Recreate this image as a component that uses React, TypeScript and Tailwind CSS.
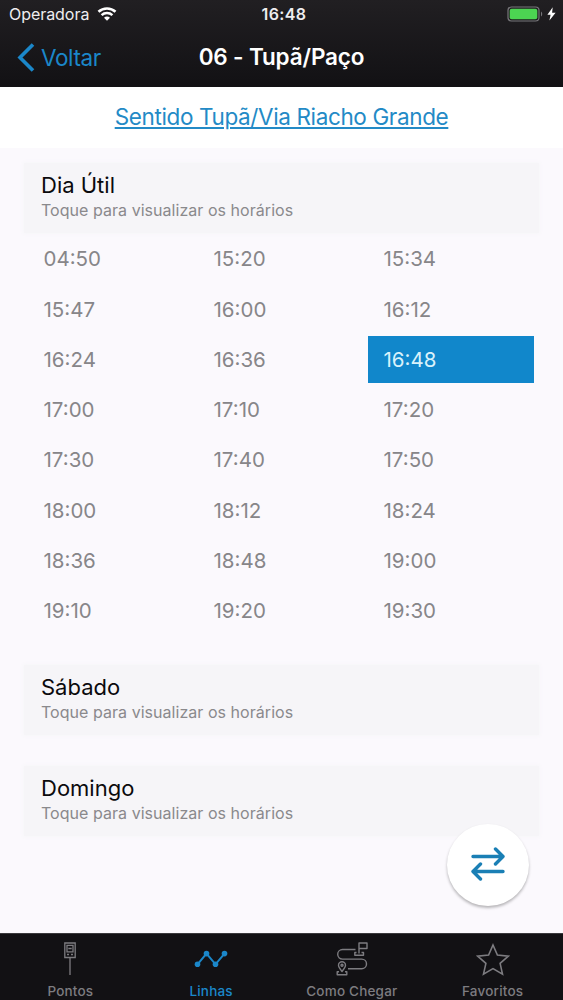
import React from "react";

const times = [
  "04:50", "15:20", "15:34",
  "15:47", "16:00", "16:12",
  "16:24", "16:36", "16:48",
  "17:00", "17:10", "17:20",
  "17:30", "17:40", "17:50",
  "18:00", "18:12", "18:24",
  "18:36", "18:48", "19:00",
  "19:10", "19:20", "19:30",
];

function StatusBar() {
  return (
    <div className="grid h-7 grid-cols-3 items-center pl-[9px] pr-[7px] text-[16px] leading-7 text-[#eeedef]">
      <div className="flex items-center gap-[8px]">
        <span className="tracking-[-0.050px]">Operadora</span>
        <svg width="20" height="14" viewBox="0 0 19 14" fill="none" stroke="#fff">
          <path d="M1 4.8C5.8.3 13.2.3 18 4.8" strokeWidth="2.6" />
          <path d="M4.1 8.2c3-2.8 7.8-2.8 10.8 0" strokeWidth="2.5" />
          <path d="M9.5 13.8 6.5 10.7c1.7-1.5 4.3-1.5 6 0Z" fill="#fff" stroke="none" />
        </svg>
      </div>
      <div className="pl-[3px] text-center font-semibold tracking-[0.4px]">16:48</div>
      <div className="flex items-center justify-end gap-[4px]">
        <svg width="36" height="16" viewBox="0 0 36 16" fill="none">
          <rect x="1" y="1" width="31" height="14" rx="3.5" stroke="#77767a" strokeWidth="1.2" />
          <rect x="2.7" y="2.7" width="27.6" height="10.6" rx="2" fill="#4cd452" />
          <path d="M34 5.5c1.6.8 1.6 4.2 0 5Z" fill="#77767a" />
        </svg>
        <svg width="9" height="14" viewBox="0 0 9 14" fill="#fff">
          <path d="M5.7.3.4 7.8h3.2L2.4 13.6 8.6 5.7H5.1Z" />
        </svg>
      </div>
    </div>
  );
}

function NavBar() {
  return (
    <div className="grid h-[59px] grid-cols-[1fr_auto_1fr] items-center pl-[17px] pr-[17px]">
      <div className="flex items-center gap-[6px] text-[#1b87c9]">
        <svg width="18" height="29" viewBox="0 0 18 29" fill="none" stroke="currentColor" strokeWidth="3.6">
          <path d="M16 1.5 3 14.5 16 27.5" />
        </svg>
        <span className="text-[22.5px] leading-7 tracking-[-0.4px]">Voltar</span>
      </div>
      <h1 className="-mt-px text-[22.5px] font-semibold leading-7 tracking-[-0.150px] text-white">06 - Tupã/Paço</h1>
      <div />
    </div>
  );
}

function DayCard({ title }: { title: string }) {
  return (
    <div className="mx-[24px] h-[70px] bg-[#f6f5f8] pl-[17px] pt-[8px] shadow-[0_0_4px_1px_#f7f6f9]">
      <div className="text-[22px] leading-[28px] text-[#0b0a0d]">{title}</div>
      <div className="mt-px text-[16px] leading-[20px] tracking-[0.040px] text-[#8a898c]">
        Toque para visualizar os horários
      </div>
    </div>
  );
}

function Tab({ label, active, children }: { label: string; active?: boolean; children: React.ReactNode }) {
  return (
    <div className={`flex flex-col items-center ${active ? "text-[#1b87c9]" : "text-[#7d7c80]"}`}>
      <div className="mt-[7px] flex h-9 items-center">{children}</div>
      <span className="mt-[5px] whitespace-nowrap text-[13.5px] font-medium leading-[18px] tracking-[0.2px]">{label}</span>
    </div>
  );
}

export default function App() {
  return (
    <div className="relative flex h-[1000px] w-[563px] flex-col overflow-hidden bg-[#fbf9fd] font-['Inter',sans-serif]">
      <header className="h-[87px] shrink-0 bg-linear-to-b from-[#211f22] to-[#121114]">
        <StatusBar />
        <NavBar />
      </header>

      <div className="flex h-[61px] shrink-0 justify-center bg-white pt-[16px]">
        <a className="text-[22.5px] leading-[28px] tracking-[-0.370px] text-[#238ac6] underline decoration-[1.5px] underline-offset-[2px]">
          Sentido Tupã/Via Riacho Grande
        </a>
      </div>

      <main className="flex-1 pt-[15px]">
        <DayCard title="Dia Útil" />
        <div className="ml-[28px] mt-[2px] grid grid-cols-[166px_166px_166px] gap-x-[4px] gap-y-[2.75px]">
          {times.map((t) => (
            <div
              key={t}
              className={`flex h-[47.5px] items-center pl-[15.5px] pt-[2px] text-[20.5px] ${
                t === "16:48" ? "bg-[#1187cb] text-[#d9f2fb]" : "text-[#878689]"
              }`}
            >
              {t}
            </div>
          ))}
        </div>
        <div className="mt-[31px] flex flex-col gap-[30.5px]">
          <DayCard title="Sábado" />
          <DayCard title="Domingo" />
        </div>
      </main>

      <nav className="grid h-[67px] shrink-0 grid-cols-4 border-t border-[#3a393c] bg-[#121114]">
        <Tab label="Pontos">
          <svg width="12" height="34" viewBox="0 0 12 34" fill="none" stroke="currentColor" strokeWidth="1.3">
            <path d="M.8 1h10.4v14.5H.8ZM3 3.3h6v6.5H3ZM4.3 6.5h3.4M3 12.5h2M7 12.5h2M6 15.5V33" />
          </svg>
        </Tab>
        <Tab label="Linhas" active>
          <svg width="34" height="18" viewBox="0 0 34 18" fill="currentColor">
            <path d="M3.5 14.3 12.5 3.6l9 10.7 9-10.7" fill="none" stroke="currentColor" strokeWidth="2" />
            <circle cx="3.5" cy="14.3" r="2.8" />
            <circle cx="12.5" cy="3.6" r="2.8" />
            <circle cx="21.5" cy="14.3" r="2.8" />
            <circle cx="30.5" cy="3.6" r="2.8" />
          </svg>
        </Tab>
        <Tab label="Como Chegar">
          <svg width="32" height="34" viewBox="0 0 32 34" fill="none" stroke="currentColor" strokeWidth="1.4" strokeLinejoin="round">
            <path d="M19.5 7.5H6.5a4.8 4.8 0 0 0 0 9.6h19.2a4.8 4.8 0 0 1 0 9.6H12" />
            <path d="M23 11.5V1h8v5.5h-8M20.5 10.5h-1.7v2.7h8.7v-2.7h-2" />
            <path d="M6 29.5c-2.3-3-3.5-4.8-3.5-6.3a3.5 3.5 0 0 1 7 0c0 1.5-1.2 3.3-3.5 6.3ZM3 29.7H1.2v3h9.6v-3H9" />
            <circle cx="6" cy="23.3" r="1" />
          </svg>
        </Tab>
        <Tab label="Favoritos">
          <svg width="34" height="33" viewBox="0 0 34 33" fill="none" stroke="currentColor" strokeWidth="1.6">
            <path d="m17 2 4.4 10.1 11 1.1-8.3 7.2 2.4 10.7L17 25.6l-9.5 5.5 2.4-10.7-8.3-7.2 11-1.1Z" />
          </svg>
        </Tab>
      </nav>

      <button className="absolute left-[447px] top-[824px] flex size-[82px] items-center justify-center rounded-full bg-white pb-[2px] shadow-[0_2px_3px_rgba(0,0,0,0.28)]">
        <svg width="36" height="34" viewBox="0 0 36 34" fill="none" stroke="#1a7fb5" strokeWidth="3.4" strokeLinecap="round" strokeLinejoin="round">
          <path d="M3 9.5H33M25.5 2 33 9.5 25.5 17" />
          <path d="M33 24.5H3M10.5 17 3 24.5 10.5 32" />
        </svg>
      </button>
    </div>
  );
}
